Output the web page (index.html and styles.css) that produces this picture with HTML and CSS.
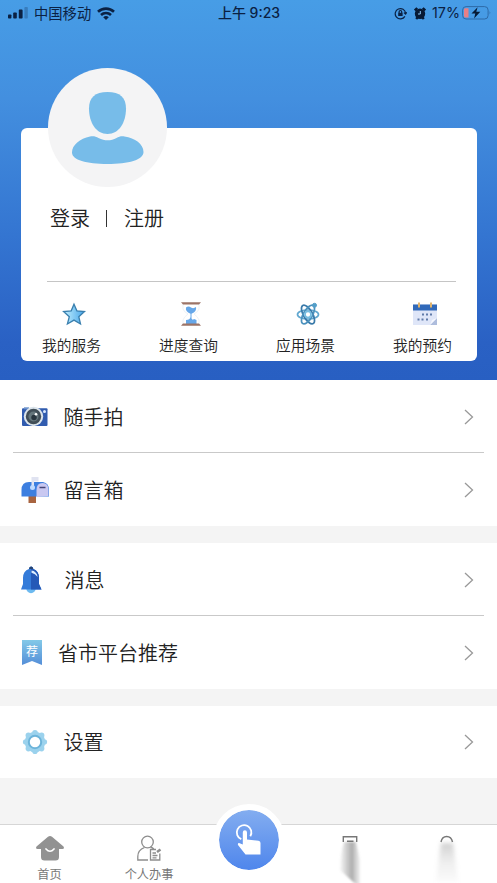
FILE: index.html
```html
<!DOCTYPE html>
<html lang="zh-CN">
<head>
<meta charset="utf-8">
<meta name="viewport" content="width=device-width, initial-scale=1">
<title>个人中心</title>
<link rel="stylesheet" href="styles.css">
</head>
<body>
<div class="app">
  <header class="hero">
    <div class="status">
      <div class="status-left">
        <svg width="20" height="12" viewBox="0 0 20 12" fill="#0b2143"><rect x="0" y="7.5" width="3.4" height="4" rx=".8"/><rect x="5.2" y="5.5" width="3.6" height="6" rx=".8"/><rect x="10.8" y="2.6" width="3.8" height="8.9" rx=".8"/><rect x="16.4" y="0" width="3.4" height="11.5" rx=".8" opacity=".25"/></svg>
        <span class="carrier">中国移动</span>
        <svg width="18" height="13" viewBox="0 0 18 13" fill="none" stroke="#0b2143" stroke-width="2.6"><path d="M1 4.800a11.600 11.600 0 0 1 16 0M4 8a7.300 7.300 0 0 1 10 0"/><path d="M6.200 10.200a4.200 4.200 0 0 1 5.600 0L9 13z" fill="#0b2143" stroke="none"/></svg>
      </div>
      <div class="clock">上午 9:23</div>
      <div class="status-right">
        <svg width="13" height="13" viewBox="0 0 13 13" fill="none" stroke="#0b2143" stroke-width="1.2"><path d="M10.900 9.400a5.200 5.200 0 1 1 .7-3.100M9.900 5.600l1.700 1.500 1.200-1.900"/><rect x="4.200" y="5.800" width="4.400" height="3.200" fill="#0b2143" stroke="none"/><path d="M5.100 6V4.800a1.300 1.300 0 0 1 2.600 0V6"/></svg>
        <svg width="12" height="13" viewBox="0 0 12 13"><circle cx="6" cy="6.700" r="5.200" fill="#071a35"/><path d="M.8 3.500L3.200 1M11.200 3.500L8.800 1M2.200 12l1.200-1.500M9.800 12l-1.200-1.500" stroke="#071a35" stroke-width="2.400"/><path d="M6.300 4v3H4" fill="none" stroke="#8cc5f5"/></svg>
        <span class="percent">17%</span>
        <svg class="battery" width="30" height="14" viewBox="0 0 30 14"><rect x=".6" y=".6" width="25.500" height="12.400" rx="3.500" fill="none" stroke="#2e6aa8"/><path d="M3.500 2.200H6.500v9.200H3.500A1.500 1.500 0 0 1 2 9.900V3.600a1.400 1.400 0 0 1 1.500-1.400z" fill="#e77f86"/><path d="M15.600 1.200L9.500 7.600h3.800l-1.200 5 6.200-6.800H14.300z" fill="#071a35"/><path d="M27.600 5q1.500 1.700 0 3.600z" fill="#2e6aa8"/></svg>
      </div>
    </div>
    <section class="card">
      <div class="avatar">
        <svg width="119" height="119" viewBox="0 0 119 119"><path d="M59.500 24C72 24 78 29.500 78 40.500c0 14-7 25.500-18.500 25.500S41 54.500 41 40.500C41 29.500 47 24 59.500 24z" fill="#77bce9"/><path d="M42 68.500c3-.5 6-.2 8.500 1.500C57 73.200 63 73 68.500 70c2.500-1.500 5-2 8-1.500C87 70 95.500 76 95.500 84c0 8-15 12-36 12S24 92 24 84.500C24 77 32 70.500 42 68.500z" fill="#77bce9"/></svg>
      </div>
      <div class="account"><a>登录</a><i class="bar"></i><a>注册</a></div>
      <div class="shortcuts">
        <div class="shortcut">
          <svg width="26" height="26" viewBox="0 0 26 26"><defs><linearGradient id="star"><stop stop-color="#c3f0ff"/><stop offset="1" stop-color="#46a5e9"/></linearGradient></defs><path d="M13 3.200l2.900 6.600 7.600.8-5.700 5.100 1.700 7.300-6.500-3.900-6.600 3.900 1.900-7.300-5.700-5.100 7.600-.8z" fill="url(#star)" stroke="#397fae" stroke-width="1.300"/></svg>
          <span>我的服务</span>
        </div>
        <div class="shortcut">
          <svg width="26" height="26" viewBox="0 0 26 26"><path d="M5 3v5q1 3 5 5-4 3-5 6v5M21 3v5q-1 3-5 5 4 3 5 6v5" fill="none" stroke="#edf3f8" stroke-width="1"/><path d="M8 6.500q2.500-2 5 0 2.500 1.500 5-.5 1 4.500-4.500 6.800v4.700q1 2 2.500.5l2.500 1v4H8v-4q4 0 4.500-3v-3.300Q7 10.500 8 6.500z" fill="#66a7e9"/><path d="M3 1.200h20l-2 2.300H5zM5 22.500h16l2 2.300H3z" fill="#9c7467"/></svg>
          <span>进度查询</span>
        </div>
        <div class="shortcut">
          <svg width="26" height="26" viewBox="0 0 26 26" fill="none" stroke-width="1.700"><ellipse cx="13" cy="13.500" rx="10.500" ry="4.500" stroke="#62a8d0"/><ellipse cx="13" cy="13.500" rx="10.500" ry="4.500" transform="rotate(60 13 13.500)" stroke="#3979a9"/><ellipse cx="13" cy="13.500" rx="10.500" ry="4.500" transform="rotate(120 13 13.500)" stroke="#4b91bd"/><circle cx="13" cy="13.500" r="3" stroke="#75bce0"/><circle cx="19.500" cy="4.300" r="2" fill="#539ec8" stroke="#539ec8" stroke-width="1"/></svg>
          <span>应用场景</span>
        </div>
        <div class="shortcut">
          <svg width="26" height="26" viewBox="0 0 26 26"><path d="M1 3.500h24v20.500H1z" fill="#dfe6f8"/><path d="M1 3.500h24v6H1z" fill="#3169b9"/><path d="M25 17v7h-7z" fill="#aebddd"/><path d="M18 24l2-5 5-2z" fill="#f5f7ff"/><path d="M7 1.500v5M19 1.500v5" stroke="#dfb36d" stroke-width="2"/><path d="M10 13.500h2M14 13.500h2M18 13.500h2M5.500 18.500h2M9.500 18.500h2M14 18.500h2" stroke="#617ba9" stroke-width="2"/></svg>
          <span>我的预约</span>
        </div>
      </div>
    </section>
  </header>

  <main class="menus">
    <section class="menu">
      <div class="item">
        <svg class="icon" width="28" height="28" viewBox="0 0 28 28"><rect x="1" y="5.300" width="25.500" height="17.700" rx="1" fill="#315caf"/><path d="M3 4.300h5v2H3z" fill="#6c92cb"/><circle cx="12.500" cy="13.500" r="9.700" fill="#dbe4eb"/><circle cx="12.500" cy="13.500" r="7.700" fill="#414e57"/><circle cx="12.500" cy="13.500" r="5" fill="#65767c"/><circle cx="13" cy="14.500" r="2.700" fill="#29363f"/><circle cx="15" cy="11.300" r="1.300" fill="#fff"/><circle cx="23.500" cy="8.500" r="1.500" fill="#d9e9ff"/></svg>
        <span class="name">随手拍</span><svg class="arrow" width="10" height="16" viewBox="0 0 10 16"><path d="M1 1l7.500 7L1 15"/></svg>
      </div>
      <div class="item">
        <svg class="icon" width="28" height="28" viewBox="0 0 28 28"><path d="M7.500 19h7.500v8H7.500z" fill="#a86440"/><path d="M8 6h14q6 1 6 8v6.500H.5V14Q.5 6 8 6z" fill="#3d7fe0"/><path d="M15.500 21v-7q0-7 6-7t6 7v6z" fill="#c9c8f1"/><path d="M10.500 1h7v4.500H13V12h-2.500z" fill="#e0e3f1"/><circle cx="11.500" cy="11.500" r="2.500" fill="#bfdaff"/><path d="M18.500 11.500h6" stroke="#454677" stroke-width="1.500"/></svg>
        <span class="name">留言箱</span><svg class="arrow" width="10" height="16" viewBox="0 0 10 16"><path d="M1 1l7.500 7L1 15"/></svg>
      </div>
    </section>
    <section class="menu">
      <div class="item">
        <svg class="icon" width="28" height="28" viewBox="0 0 28 28"><circle cx="10" cy="22.500" r="4.700" fill="#6dbaf0"/><path d="M8 3q0-2.500 2-2.500T12.300 3Q18 5 18 12v6l2.500 5.500H0L2 18v-6Q2 5 8 3z" fill="#347bd9"/><path d="M10 .5Q12 .5 12.300 3 18 5 18 12v6l2.500 5.500H10z" fill="#2459b7"/><path d="M8 3q0-2.500 2-2.500T12.300 3z" fill="#28436f"/><path d="M10.500 4.500q5 .5 6.200 6.500-2.500-3.500-6.200-4.300z" fill="#dceeff"/></svg>
        <span class="name nudge">消息</span><svg class="arrow" width="10" height="16" viewBox="0 0 10 16"><path d="M1 1l7.500 7L1 15"/></svg>
      </div>
      <div class="item">
        <span class="ribbon">荐</span>
        <span class="name">省市平台推荐</span><svg class="arrow" width="10" height="16" viewBox="0 0 10 16"><path d="M1 1l7.500 7L1 15"/></svg>
      </div>
    </section>
    <section class="menu">
      <div class="item">
        <svg class="icon" width="28" height="28" viewBox="0 0 28 28"><g fill="#9bd2ed"><circle cx="14" cy="14" r="10.300"/><circle cx="14" cy="4.700" r="2.800"/><circle cx="14" cy="23.300" r="2.800"/><circle cx="4.700" cy="14" r="2.800"/><circle cx="23.300" cy="14" r="2.800"/><circle cx="7.400" cy="7.400" r="2.800"/><circle cx="20.600" cy="7.400" r="2.800"/><circle cx="7.400" cy="20.600" r="2.800"/><circle cx="20.600" cy="20.600" r="2.800"/></g><circle cx="14" cy="14" r="6.200" fill="#fff" stroke="#6cb4da" stroke-width="2"/></svg>
        <span class="name">设置</span><svg class="arrow" width="10" height="16" viewBox="0 0 10 16"><path d="M1 1l7.500 7L1 15"/></svg>
      </div>
    </section>
  </main>

  <nav class="tabs">
    <div class="tab">
      <svg width="30" height="27" viewBox="0 0 30 27"><path d="M13 1.800q2-1.600 4 0l11.500 9.700q1.300 2-1 2.500H24v8q0 3.500-3.500 3.500h-11Q6 25.500 6 22v-8H2.500q-2.300-.5-1-2.500z" fill="#929292"/><path d="M11 14q4 4.500 8 0" fill="none" stroke="#fff" stroke-width="1.700" stroke-linecap="round"/></svg>
      <span>首页</span>
    </div>
    <div class="tab">
      <svg width="30" height="27" viewBox="0 0 30 27" fill="none" stroke="#8d8d8d" stroke-width="1.300"><circle cx="13.500" cy="7" r="5.800"/><path d="M14 25H3.800v-3.500q0-6.500 6.700-9M16.500 12.200q2.300.7 3.300 1.800M22 14.500h-5.500V25h9.300v-6.500M18.500 18h3.500M18.500 20.500h5M18.500 22.800h4"/><path d="M23 17l3.500-2.500" stroke-width="2.500"/></svg>
      <span>个人办事</span>
    </div>
    <div class="tab center">
      <div class="action">
        <svg width="28" height="34" viewBox="0 0 28 34"><path d="M6.300 16.200A7.300 7.300 0 1 1 15.300 13.300" fill="none" stroke="#fff" stroke-width="1.800"/><path d="M7.800 9.500q0-2.200 2.100-2.200T12 9.500v7l11.500 1.300q2 .2 2 2.200v11.500H10.500L3 22q-.5-2 1-2l3.800 1.500z" fill="#fff"/></svg>
      </div>
    </div>
    <div class="tab">
      <svg class="faded" width="40" height="48" viewBox="0 0 40 48"><defs><linearGradient id="fa" x2="1" y2="0"><stop stop-color="#777" stop-opacity=".05"/><stop offset=".6" stop-color="#777" stop-opacity=".6"/><stop offset="1" stop-color="#999" stop-opacity=".15"/></linearGradient><filter id="blurA"><feGaussianBlur stdDeviation="1.300"/></filter></defs><path d="M14 7h12l4 18v28L10 35q0-16 4-28z" fill="url(#fa)" filter="url(#blurA)"/><path d="M13.300 7V1.800h13.400V7M17 6.300h6.500" fill="none" stroke="#777" stroke-width="1.400"/></svg>
    </div>
    <div class="tab">
      <svg class="faded" width="40" height="48" viewBox="0 0 40 48"><defs><linearGradient id="fb" x2="0" y2="1"><stop stop-color="#999" stop-opacity=".45"/><stop offset=".5" stop-color="#aaa" stop-opacity=".2"/><stop offset="1" stop-color="#bbb" stop-opacity=".08"/></linearGradient><filter id="blurB"><feGaussianBlur stdDeviation="2"/></filter></defs><path d="M14 8h12l5 38H9z" fill="url(#fb)" filter="url(#blurB)"/><path d="M14 7q1-5.500 5.700-5.500T25.500 7" fill="none" stroke="#777" stroke-width="1.400"/></svg>
    </div>
  </nav>
</div>
</body>
</html>
```
FILE: styles.css
```css
* { box-sizing: border-box; }
body {
  margin: 0;
  background: #f4f4f4;
  color: #222;
  font-family: "Noto Sans CJK SC", sans-serif;
  font-weight: 350;
}
svg { display: block; flex: none; }
.app {
  width: 497px;
  height: 883px;
  display: flex;
  flex-direction: column;
  overflow: hidden;
}
.hero {
  height: 380px;
  flex: none;
  background: linear-gradient(#479de6 0, #438fdf 26%, #3475d1 62%, #2a61c4 90%, #285fc2);
}
.status {
  height: 26px;
  display: grid;
  grid-template-columns: 1fr auto 1fr;
  align-items: center;
  padding: 0 7px 0 8px;
  color: #0b2143;
  font-size: 14.3px;
  font-weight: 400;
  line-height: 26px;
}
.status-left, .status-right { display: flex; align-items: center; }
.carrier { margin: 0 6px; }
.clock { font-family: Inter, "Noto Sans CJK SC", sans-serif; font-weight: 500; font-size: 14px; }
.status-right { justify-content: flex-end; gap: 7px; }
.percent { font-family: Inter, sans-serif; font-size: 14.3px; margin: 0 -5px 0 -1px; }
.battery { margin-right: -2px; }
.card {
  width: 456px;
  height: 233px;
  margin: 102px 0 0 21px;
  display: flex;
  flex-direction: column;
  background: #fff;
  border-radius: 6px;
}
.avatar {
  width: 119px;
  height: 119px;
  border-radius: 50%;
  background: #f4f4f5;
  margin: -60px 0 0 27px;
}
.account {
  display: flex;
  align-items: center;
  height: 30px;
  margin: 16px 0 0 29px;
  font-size: 20px;
  line-height: 30px;
}
.bar { width: 1px; height: 17px; background: #333; margin: 0 17px 0 16px; }
.shortcuts {
  display: grid;
  grid-template-columns: repeat(4, 117px);
  margin: 48px 0 0 -8px;
  position: relative;
  padding-top: 20px;
}
.shortcuts::before {
  content: "";
  position: absolute;
  left: 34px;
  top: 0;
  width: 409px;
  height: 1px;
  background: #c5c5c5;
}
.shortcut {
  display: flex;
  flex-direction: column;
  align-items: center;
  gap: 7px;
  font-size: 14.7px;
  line-height: 22px;
}
.shortcut svg { margin-left: 5px; }
.menus { display: flex; flex-direction: column; gap: 17px; flex: none; }
.menu { background: #fff; }
.item {
  height: 72px;
  display: flex;
  align-items: center;
  padding: 1px 23px 0 21px;
}
.item + .item { height: 74px; position: relative; }
.item + .item::before {
  content: "";
  position: absolute;
  left: 13px;
  right: 13px;
  top: 0;
  height: 1px;
  background: #c9c9c9;
}
.icon { margin-right: 14.5px; }
.name { font-size: 20px; line-height: 30px; }
.nudge { margin-left: 1px; }
.arrow { margin-left: auto; fill: none; stroke: #999; stroke-width: 1.3; }
.ribbon {
  width: 20px;
  height: 25px;
  margin: 0 16px 0 1px;
  background: linear-gradient(#83c9e8, #548ed8);
  clip-path: polygon(0 0, 100% 0, 100% 100%, 50% 84%, 0 100%);
  color: #fff;
  font-size: 12px;
  font-weight: 400;
  line-height: 22px;
  text-align: center;
}
.menu:last-child .item { padding-top: 0; }
.tabs {
  margin-top: auto;
  height: 59px;
  flex: none;
  display: grid;
  grid-template-columns: 99px 100px 100px 101px 93px;
  background: #fff;
  border-top: 1px solid #d6d6d6;
}
.tab {
  display: flex;
  flex-direction: column;
  align-items: center;
  padding-top: 10px;
  color: #777;
  font-size: 12.2px;
  font-weight: 400;
  line-height: 18px;
}
.tab span { margin-top: 3px; white-space: nowrap; }
.center { padding: 0; }
.action {
  width: 72px;
  height: 72px;
  margin-top: -21px;
  flex: none;
  display: flex;
  align-items: center;
  justify-content: center;
  border: 6px solid #fff;
  border-radius: 50%;
  background: linear-gradient(#83adf0, #4f86ec) padding-box;
}
```
